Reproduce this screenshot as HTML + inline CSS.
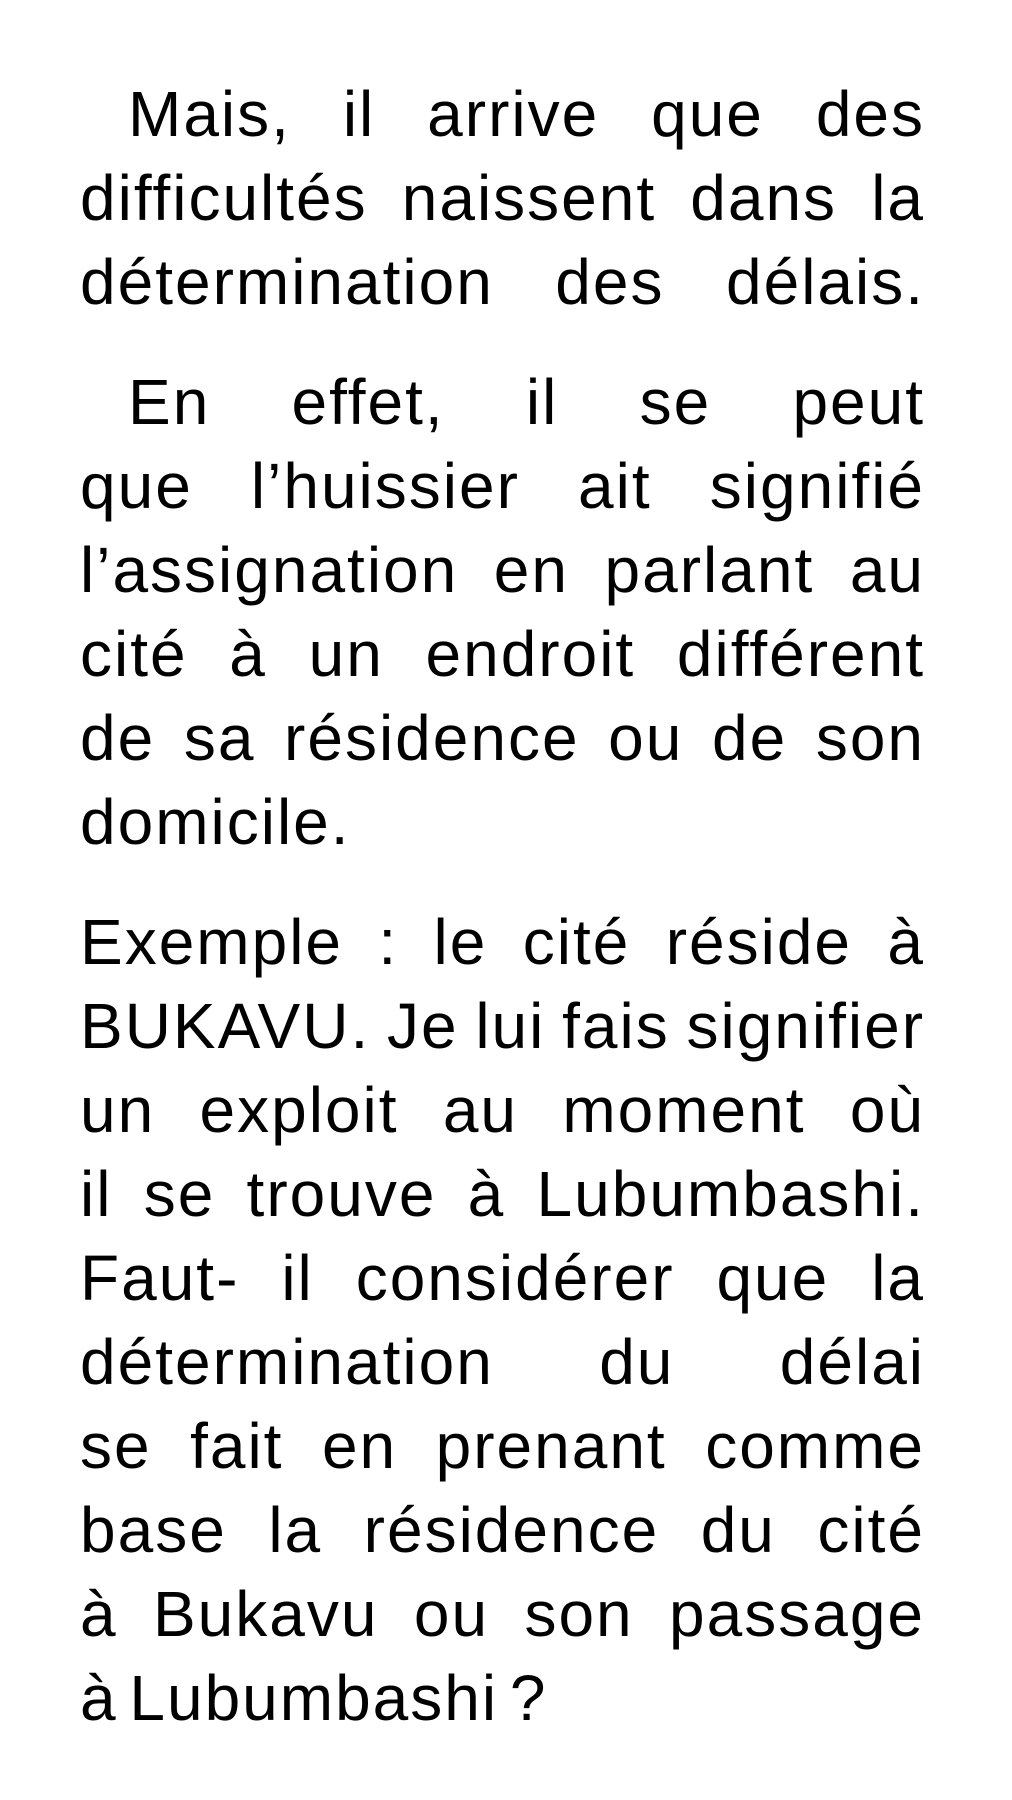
<!DOCTYPE html>
<html><head><meta charset="utf-8"><style>
html,body{margin:0;padding:0;background:#fff;width:1012px;height:1800px;overflow:hidden}
.w{position:absolute;left:80px;top:72px;width:845px;font-family:"Liberation Sans",sans-serif;font-size:64px;line-height:84px;color:#000;letter-spacing:2px;word-spacing:-8px}
.l{display:block;text-align:justify;text-align-last:justify;white-space:nowrap}
.e{display:block;text-align:left}
.i{padding-left:48px}
.p{margin-bottom:36px}
</style></head><body><div class="w">
<div class="p"><span class="l i">Mais, il arrive que des</span><span class="l">difficultés naissent dans la</span><span class="l">détermination des délais.</span></div>
<div class="p"><span class="l i">En effet, il se peut</span><span class="l">que l’huissier ait signifié</span><span class="l">l’assignation en parlant au</span><span class="l">cité à un endroit différent</span><span class="l">de sa résidence ou de son</span><span class="e">domicile.</span></div>
<div><span class="l">Exemple : le cité réside à</span><span class="l">BUKAVU. Je lui fais signifier</span><span class="l">un exploit au moment où</span><span class="l">il se trouve à Lubumbashi.</span><span class="l">Faut- il considérer que la</span><span class="l">détermination du délai</span><span class="l">se fait en prenant comme</span><span class="l">base la résidence du cité</span><span class="l">à Bukavu ou son passage</span><span class="e">à Lubumbashi ?</span></div>
</div></body></html>
